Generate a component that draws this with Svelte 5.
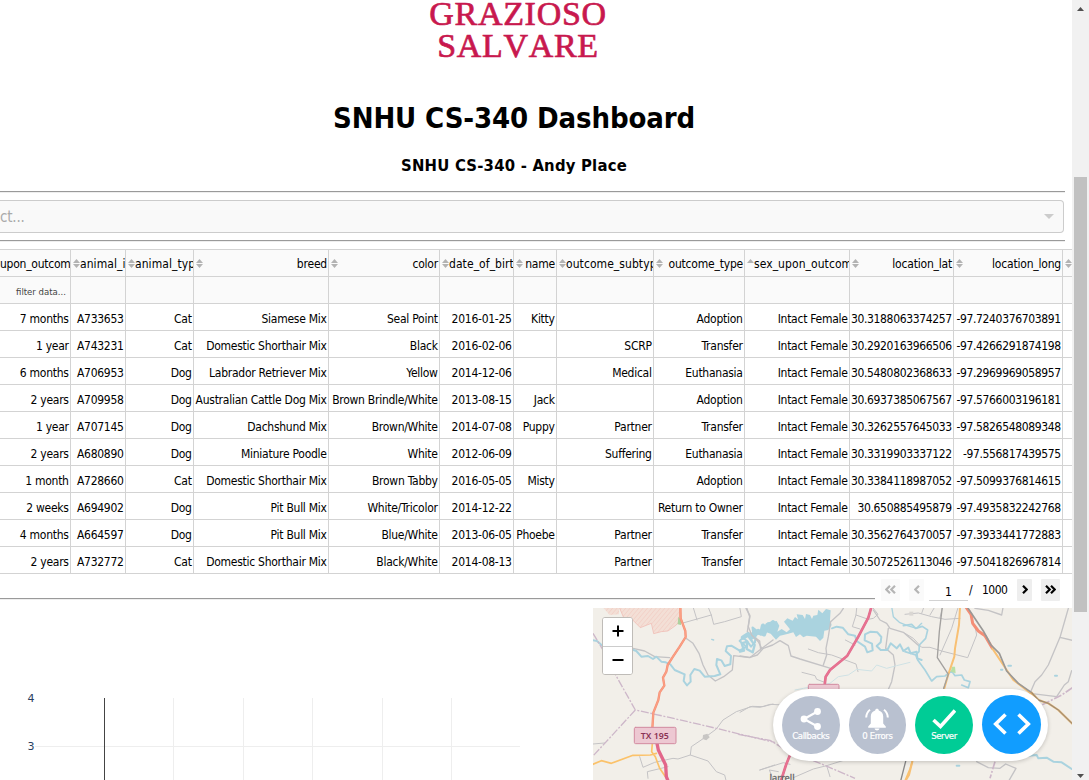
<script>
  const columns = [
    { label: 'upon_outcom', sort: '', clip: true },
    { label: 'animal_id', sort: 'both', clip: true },
    { label: 'animal_type', sort: 'both', clip: true },
    { label: 'breed', sort: 'both' },
    { label: 'color', sort: 'both' },
    { label: 'date_of_birth', sort: 'both', clip: true },
    { label: 'name', sort: 'both' },
    { label: 'outcome_subtype', sort: 'both', clip: true },
    { label: 'outcome_type', sort: 'both' },
    { label: 'sex_upon_outcome', sort: 'up', clip: true },
    { label: 'location_lat', sort: 'both' },
    { label: 'location_long', sort: 'both' },
    { label: '', sort: 'both' }
  ];
  const rows = [
    ['7 months', 'A733653', 'Cat', 'Siamese Mix', 'Seal Point', '2016-01-25', 'Kitty', '', 'Adoption', 'Intact Female', '30.3188063374257', '-97.7240376703891', ''],
    ['1 year', 'A743231', 'Cat', 'Domestic Shorthair Mix', 'Black', '2016-02-06', '', 'SCRP', 'Transfer', 'Intact Female', '30.2920163966506', '-97.4266291874198', ''],
    ['6 months', 'A706953', 'Dog', 'Labrador Retriever Mix', 'Yellow', '2014-12-06', '', 'Medical', 'Euthanasia', 'Intact Female', '30.5480802368633', '-97.2969969058957', ''],
    ['2 years', 'A709958', 'Dog', 'Australian Cattle Dog Mix', 'Brown Brindle/White', '2013-08-15', 'Jack', '', 'Adoption', 'Intact Female', '30.6937385067567', '-97.5766003196181', ''],
    ['1 year', 'A707145', 'Dog', 'Dachshund Mix', 'Brown/White', '2014-07-08', 'Puppy', 'Partner', 'Transfer', 'Intact Female', '30.3262557645033', '-97.5826548089348', ''],
    ['2 years', 'A680890', 'Dog', 'Miniature Poodle', 'White', '2012-06-09', '', 'Suffering', 'Euthanasia', 'Intact Female', '30.3319903337122', '-97.556817439575', ''],
    ['1 month', 'A728660', 'Cat', 'Domestic Shorthair Mix', 'Brown Tabby', '2016-05-05', 'Misty', '', 'Adoption', 'Intact Female', '30.3384118987052', '-97.5099376814615', ''],
    ['2 weeks', 'A694902', 'Dog', 'Pit Bull Mix', 'White/Tricolor', '2014-12-22', '', '', 'Return to Owner', 'Intact Female', '30.650885495879', '-97.4935832242768', ''],
    ['4 months', 'A664597', 'Dog', 'Pit Bull Mix', 'Blue/White', '2013-06-05', 'Phoebe', 'Partner', 'Transfer', 'Intact Female', '30.3562764370057', '-97.3933441772883', ''],
    ['2 years', 'A732772', 'Cat', 'Domestic Shorthair Mix', 'Black/White', '2014-08-13', '', 'Partner', 'Transfer', 'Intact Female', '30.5072526113046', '-97.5041826967814', '']
  ];
</script>

<div class="window">
  <main class="page">
    <div class="logo"><span>GRAZIOSO</span><span class="wide">SALVARE</span></div>
    <h1>SNHU CS-340 Dashboard</h1>
    <h2>SNHU CS-340 - Andy Place</h2>
    <div class="rule"></div>
    <div class="select">
      <span>ct...</span>
      <i class="caret"></i>
    </div>
    <div class="rule second"></div>

    <div class="table">
      <div class="row head">
        {#each columns as c}
          <div class="cell" class:clip={c.clip}>
            {#if c.sort}
              <svg class="sort" width="7" height="9" viewBox="0 0 7 9">
                {#if c.sort === 'up'}
                  <path d="M0 4 3.5 0 7 4z" />
                {:else}
                  <path d="M0 3.9 3.5 0 7 3.9zM0 5.1h7L3.5 9z" />
                {/if}
              </svg>
            {/if}
            <span class="label">{c.label}</span>
          </div>
        {/each}
      </div>
      <div class="row filter">
        {#each columns as c, i}
          <div class="cell">{#if i === 0}<span class="hint">filter data...</span>{/if}</div>
        {/each}
      </div>
      {#each rows as r}
        <div class="row data">
          {#each r as value, i}<div class="cell" class:num={i > 9}><span>{value}</span></div>{/each}
        </div>
      {/each}
    </div>

    <div class="footer">
      <div class="rule third"></div>
      <div class="pager">
        <button class="wide off" aria-label="First"><svg width="11" height="9" viewBox="0 0 11 9"><path d="M5 .8 1.3 4.5 5 8.2M10 .8 6.3 4.5 10 8.2" /></svg></button>
        <button class="off" aria-label="Previous"><svg width="6" height="9" viewBox="0 0 6 9"><path d="M5 .8 1.3 4.5 5 8.2" /></svg></button>
        <span class="current">1</span>
        <span class="slash">/</span>
        <span class="total">1000</span>
        <button class="next" aria-label="Next"><svg width="6" height="9" viewBox="0 0 6 9"><path d="M1 .8 4.7 4.5 1 8.2" /></svg></button>
        <button class="wide" aria-label="Last"><svg width="11" height="9" viewBox="0 0 11 9"><path d="M1 .8 4.7 4.5 1 8.2M6 .8 9.7 4.5 6 8.2" /></svg></button>
      </div>
    </div>

    <div class="bottom">
      <svg class="chart" width="593" height="172" viewBox="0 608 593 172">
        <path d="M173.5 698V780M243.5 698V780M312.5 698V780M382.5 698V780M451.5 698V780M35 746.5H520" stroke="#eee" />
        <path d="M104.5 698V780" stroke="#444" />
        <text x="34.5" y="702">4</text>
        <text x="34.5" y="750">3</text>
      </svg>

      <div class="map">
        <svg width="479" height="172" viewBox="593 608 479 172">
          <defs>
            <pattern id="hatch" width="10" height="10" patternUnits="userSpaceOnUse" patternTransform="rotate(40)">
              <rect width="10" height="10" fill="#f3dfd6" /><path d="M0 0V10" stroke="#f1bdb5" stroke-width="2" />
            </pattern>
          </defs>
          <rect x="593" y="608" width="479" height="172" fill="#f2efe9" />
          <g transform="translate(593 605) scale(.33333)" fill="none" stroke-linejoin="round" stroke-linecap="round">
            <path d="M78 5 95 45 118 44 142 68 175 55 182 86 205 80 225 78 250 60 258 50 262 5z" fill="url(#hatch)" stroke="#f0b5ad" stroke-width="2" />
            <path d="M28 5 50 30 78 28 78 5z" fill="url(#hatch)" />
            <path d="M256 35 264 45 264 60 254 58z" fill="#add19e" stroke="none" />
            <g stroke="#c4c3c5" stroke-width="4">
              <path d="M270 54 355 30 345 5M300 5 312 45M355 30 362 58 395 50 445 35 440 5" stroke-width="3" />
              <path d="M277 98 300 115 318 145 330 180 345 210 367 228 392 215 418 195 422 152 470 158 500 135 540 105M460 5 470 35 463 80 500 108 503 135M120 130 155 138 185 155 230 158" />
              <path d="M540 297 510 305 478 304 430 320 390 345 370 372 335 398 295 425 292 450 255 462 240 460 185 472 150 487 140 455M292 450 345 468 370 500 395 510 400 530M165 520 163 500 225 485M0 417 35 414M500 495 545 480" stroke-width="3" />
            </g>
            <path d="M330 390 343 386 350 397 340 406 329 402z" fill="#c8c6c4" />
            <g stroke="#aad3df" stroke-width="6">
              <path d="M-5 105 12 108 30 124 60 122 100 128 130 138 145 155 165 153 180 162 190 155 205 170 218 172 232 178 245 195 275 208 272 228 282 241 293 230 292 210 304 192 320 197 335 215 365 213 382 208 370 180 372 162 385 166 395 183 412 178 414 153 398 138 402 124 415 122 440 137 460 125 440 108 450 98 462 108 474 125 486 112 487 95" />
              <path d="M450 98 465 88 475 98 485 80 505 85 510 62 520 72 540 52" stroke-width="13" />
              <path d="M356 103 362 105" stroke-width="4" />
            </g>
            <path d="M0 85 27 130 50 170 68 210 127 315 210 333 370 370 480 397 545 412M127 315 60 388 0 453" stroke="#cdb7c9" stroke-width="4" stroke-dasharray="24 5 6 5" stroke-linecap="butt" />
            <path d="M262 0 263 40 277 78 278 96 260 125 240 155 224 180 220 200 210 218 214 242 200 262 196 285 181 323 178 370" stroke="#f58f74" stroke-width="7" />
            <path d="M262 0 263 40 277 78 278 96 260 125 240 155 224 180 220 200 210 218 214 242 200 262 196 285 181 323 178 370" stroke="#fb9f84" stroke-width="4" />
            <path d="M-5 480 25 467 55 475 120 451 172 450 190 445M178 415 176 440 187 455 200 490 222 522" stroke="#fbc26a" stroke-width="5" />
            <path d="M192 415 196 435 218 480 220 515 226 530" stroke="#e2668a" stroke-width="10" />
            <rect x="124" y="367" width="125" height="49" rx="4" fill="#edc8d2" stroke="#d28ba0" stroke-width="3" />
          </g>
          <g transform="translate(740 605) scale(.33333)" fill="none" stroke-linejoin="round" stroke-linecap="round">
            <path d="M75 80 82 52 110 48 118 62 112 80 125 72 140 82 150 73 132 50 142 40 158 47 165 36 174 43 170 28 188 30 195 42 198 27 210 30 216 42 220 32 232 30 235 14 247 25 258 12 272 16 270 45 275 60 265 75 253 77 250 98 240 108 228 95 200 92 190 97 180 88 168 96 160 82 145 86 120 92 108 104 92 86z" fill="#aad3df" />
            <path d="M0 140 12 137 5 115 22 110 20 132 38 142 44 120 28 98 40 82 38 68 62 88 70 65" stroke="#aad3df" stroke-width="7" />
            <path d="M40 95 55 78 72 88 82 60 95 70" stroke="#aad3df" stroke-width="13" />
            <g stroke="#c4c3c5" stroke-width="4">
              <path d="M0 153 30 157 52 150 70 130 98 120 120 107 145 122 153 153 180 162 272 190M18 10 30 32 25 65 35 90 55 110 66 132M250 180 260 150 258 130 265 95 272 50 300 25 310 10" />
              <path d="M205 132 235 143 275 150 348 177 354 200M316 105 345 120M186 202 225 212 230 223 254 232M350 10 348 30 337 65 360 72 M348 30 385 43 400 40 414 28 400 10" stroke-width="3" />
              <path d="M400 15 420 45 440 55 450 70 490 82 540 125M445 70 437 130 460 150 465 180 455 230 440 265" />
              <path d="M0 322 30 305 60 307 90 298 130 300M60 495 130 473 150 478M160 518 220 492 260 482 330 460M260 482 270 515M100 525 88 495 115 500" stroke-width="3" />
            </g>
            <path d="M276 70 290 65 308 68 325 88 345 92 350 108 375 125 382 142 398 136 396 116 374 106 375 88 392 80 412 82 424 96 422 112 410 123 422 135 442 135 452 115 470 130 480 118 490 138 505 128 512 145 530 140 532 160 545 165" stroke="#aad3df" stroke-width="6" />
            <path d="M455 5 460 35 478 52 502 62 530 70 545 55" stroke="#aad3df" stroke-width="4" />
            <path d="M165 255 190 250 270 235 295 215 325 210 350 193 395 198 410 180 440 190 470 182 510 172" stroke="#cfe2e5" stroke-width="3" />
            <path d="M-5 388 90 406 130 430 240 475 345 520" stroke="#cdb7c9" stroke-width="4" stroke-dasharray="24 5 6 5" stroke-linecap="butt" />
            <path d="M396 0 385 38 355 95 322 152 270 195 257 215 254 240M150 450 138 480 122 530" stroke="#e06c8d" stroke-width="8" />
            <path d="M396 0 385 38 355 95 322 152 270 195 257 215 254 240M150 450 138 480 122 530" stroke="#e87291" stroke-width="5" />
            <rect x="205" y="238" width="92" height="49" rx="4" fill="#edc8d2" stroke="#d28ba0" stroke-width="3" />
            <path d="M498 465 482 528" stroke="#888" stroke-width="4" />
            <path d="M518 465 510 492 495 528" stroke="#fbc26a" stroke-width="5" />
          </g>
          <g transform="translate(905 605) scale(.33333)" fill="none" stroke-linejoin="round" stroke-linecap="round">
            <g stroke="#c4c3c5" stroke-width="4">
              <path d="M0 28 40 24 80 35 120 43 165 40M50 25 56 8M75 30 88 8M105 38 112 8M0 85 25 100 50 127 75 127 110 138 188 158 215 90 210 65M105 150 140 70 160 5" stroke-width="3" />
              <path d="M210 10 250 16 290 30 294 8M490 10 480 45 465 97 430 180 410 210 390 230 375 265 455 275 478 240 490 230 500 197M465 97 502 106" />
              <path d="M215 470 250 488 285 490 302 477 333 490 310 530" />
            </g>
            <path d="M-5 62 20 58 32 70 52 64 68 75 62 100 43 120 42 140 32 150 38 165 60 195 80 228 95 215 120 213 140 198 150 212 170 210 178 225 195 230 190 248 170 240M0 140 32 150" stroke="#aad3df" stroke-width="5" />
            <path d="M310 182H318M288 194H292M450 212H456M155 482H163" stroke="#aad3df" stroke-width="6" />
            <path d="M370 452 395 450 400 460 425 458 445 470 470 472 500 492" stroke="#aad3df" stroke-width="6" />
            <path d="M140 185 150 185 152 205 138 200z" fill="#b8dfa5" />
            <path d="M502 248 470 270 410 300 380 340M270 470 255 520" stroke="#cdb7c9" stroke-width="5" stroke-dasharray="24 5 6 5" stroke-linecap="butt" />
            <path d="M182 5 198 28 203 55 220 78 240 92 262 130" stroke="#f48e76" stroke-width="9" />
            <path d="M165 5 162 60 150 130 148 155 130 208 118 250M262 130 295 180 325 225 375 263 400 285M22 470 12 510 0 530" stroke="#f8c074" stroke-width="6" />
            <path d="M112 5 103 80 97 158 130 208 116 250" stroke="#a3a19f" stroke-width="4" />
            <path d="M186 5 235 78 258 120 283 145 305 198 340 235 380 263" stroke="#9a9896" stroke-width="5" />
            <path d="M380 263 400 285 430 295 460 315 503 357" stroke="#d6a868" stroke-width="6" />
            <path d="M380 263 400 285 430 295 460 315 503 357" stroke="#95897b" stroke-width="3" />
            <path d="M13 20h12v12h-12z" fill="#dad7d3" />
          </g>
          <text class="road" x="640.8" y="739.3" textLength="28" lengthAdjust="spacingAndGlyphs">TX 195</text>
          <text class="town" x="769.5" y="780.5" textLength="25" lengthAdjust="spacingAndGlyphs">Jarrell</text>
        </svg>
        <div class="zoom">
          <button aria-label="Zoom in"><svg width="12" height="12" viewBox="0 0 12 12"><path d="M0.5 6H11.5M6 .5V11.5" /></svg></button>
          <button aria-label="Zoom out"><svg width="12" height="12" viewBox="0 0 12 12"><path d="M0.5 6H11.5" /></svg></button>
        </div>
      </div>
    </div>
  </main>

  <div class="scrollbar">
    <svg width="17" height="17" viewBox="0 0 17 17"><path d="M5 11 8.5 7 12 11z" fill="#505050" /></svg>
    <div class="thumb"></div>
    <svg width="17" height="17" viewBox="0 0 17 17"><path d="M5 11 8.5 15 12 11z" fill="#505050" /></svg>
  </div>

  <div class="debug">
    <div class="bubble">
      <svg width="24" height="24" viewBox="0 0 24 24"><path d="M18.5 4.5 5 12 18.5 19.5" fill="none" stroke="#fff" stroke-width="2.2" /><circle cx="18.5" cy="4.5" r="3.4" fill="#fff" /><circle cx="5" cy="12" r="3.4" fill="#fff" /><circle cx="18.5" cy="19.5" r="3.4" fill="#fff" /></svg>
      <span>Callbacks</span>
    </div>
    <div class="bubble">
      <svg width="24" height="24" viewBox="0 0 24 24"><path d="M12 1.7c1 0 1.8.7 1.8 1.7 3 .9 4.4 3.2 4.4 6.2v7l2.6 3v1.2H3.2v-1.2l2.6-3v-7c0-3 1.4-5.3 4.4-6.2 0-1 .8-1.7 1.8-1.7zM9.5 21.600h5a2.500 1.800 0 0 1-5 0z" fill="#fff" /><path d="M5 2.700Q1.400 5.400 1.200 10.500M19 2.700Q22.600 5.400 22.800 10.500" fill="none" stroke="#fff" stroke-width="2" /></svg>
      <span>0 Errors</span>
    </div>
    <div class="bubble ok">
      <svg width="24" height="24" viewBox="0 0 24 24"><path d="M1.500 13 8.500 19.500 23 3.500" fill="none" stroke="#fff" stroke-width="3.600" /></svg>
      <span>Server</span>
    </div>
    <div class="bubble code">
      <svg width="38" height="24" viewBox="0 0 38 24"><path d="M12.500 2.500 2.700 12 12.500 21.500M25.500 2.500 35.300 12 25.500 21.500" fill="none" stroke="#fff" stroke-width="3.600" /></svg>
    </div>
  </div>
</div>

<style>
  :global(body) { margin: 0; background: #fff; overflow: hidden; }
  .window {
    position: relative; display: flex; width: 1089px; height: 780px; overflow: hidden;
    font-family: "DejaVu Sans Condensed", "DejaVu Sans", sans-serif; font-stretch: condensed; color: #000;
  }
  .page { width: 1072px; height: 780px; overflow: hidden; display: flex; flex-direction: column; }
  .page > * { flex-shrink: 0; }
  .logo {
    width: 1036px; height: 62px; display: flex; flex-direction: column; align-items: center;
    font: 34px/32px "Liberation Serif", serif; color: #c8184e; -webkit-text-stroke: 0.7px #c8184e;
    font-kerning: none; letter-spacing: 0.7px;
  }
  .logo span { white-space: nowrap; margin-top: -2px; height: 32px; }
  .logo .wide { margin-top: 0; }
  h1, h2 { margin: 0; width: 1028px; text-align: center; white-space: nowrap; font-weight: bold; }
  h1 { font-size: 29px; line-height: 36px; margin-top: 38px; letter-spacing: -0.13px; }
  h2 { font-size: 16.5px; line-height: 20px; margin-top: 20px; letter-spacing: 0.22px; }
  .rule { width: 1065px; height: 1px; background: #9a9a9a; border-bottom: 1px solid #eee; margin-top: 15px; }
  .rule.second { margin-top: 7px; }
  .select {
    margin-top: 7px; width: 1064px; height: 33px; box-sizing: border-box; border: 1px solid #ccc; border-left: 0;
    border-radius: 0 4px 4px 0; background: #f9f9f9; display: flex; align-items: center; justify-content: space-between;
    padding: 0 9px 0 0; color: #aaa; font-size: 15px; letter-spacing: -0.2px;
  }
  .caret { border: 5px solid transparent; border-top-color: #ccc; border-bottom: 0; }
  .table { margin-top: 7px; border-top: 1px solid #d3d3d3; font-size: 12px; letter-spacing: -0.2px; }
  .row { display: grid; grid-template-columns: 71px 55px 68px 135px 111px 74px 43px 97px 91px 105px 104px 109px 9px; height: 27px; }
  .cell {
    box-sizing: border-box; border-right: 1px solid #d3d3d3; border-bottom: 1px solid #d3d3d3; min-width: 0;
    display: flex; align-items: center; justify-content: flex-end; padding: 0 1px 0 2px; white-space: nowrap; overflow: hidden;
  }
  .data .cell { padding: 3px 1.3px 0 0; letter-spacing: -0.26px; }
  .data .num { letter-spacing: -0.36px; }
  .cell:last-child { border-right: 0; }
  .head .cell, .filter .cell { background: #fafafa; }
  .head .cell { justify-content: space-between; }
  .head .clip { justify-content: flex-start; padding-right: 0; letter-spacing: 0.07px; }
  .head .cell:first-child { padding-left: 0; letter-spacing: -0.25px; }
  .label { padding-top: 1px; }
  .sort { fill: #b3b3b3; flex: none; }
  .hint { font-size: 9.5px; color: #444; padding-right: 3px; padding-top: 2px; letter-spacing: 0; }
  .footer { height: 34px; display: flex; align-items: flex-start; font-size: 12px; }
  .rule.third { width: 875px; margin-top: 24px; }
  .pager { display: flex; align-items: center; height: 22px; margin-top: 5px; padding-left: 6px; }
  .pager button { border: 0; padding: 0; width: 15px; height: 22px; background: #eee; display: flex; align-items: center; justify-content: center; border-radius: 1px; }
  .pager button svg { margin-top: -1px; }
  .pager .wide { width: 19px; }
  .pager .off { background: #fafafa; }
  .pager path { fill: none; stroke: #000; stroke-width: 2.2; }
  .pager .off path { stroke: #b5b5b5; }
  .pager .off + .off { margin-left: 9px; }
  .current { width: 39px; height: 21px; line-height: 26px; border-bottom: 1px solid #d3d3d3; margin-left: 5px; text-align: center; }
  .slash { margin-left: 1px; width: 13px; }
  .total { width: 35px; letter-spacing: -0.5px; }
  .next { margin-right: 9px; }
  .bottom { display: flex; height: 172px; }
  .chart { flex: none; }
  .chart text { font: 11px "DejaVu Sans", sans-serif; fill: #2a3f5f; text-anchor: end; }
  .map { position: relative; width: 479px; height: 172px; }
  .map > svg { display: block; }
  .road { font: 600 9.5px "Noto Sans", sans-serif; fill: #8a3254; }
  .town { font: 9.5px "Noto Sans", sans-serif; fill: #666; stroke: #666; stroke-width: .3; }
  .zoom {
    position: absolute; left: 9px; top: 9px; width: 31px; height: 58px; box-sizing: border-box; border: 1px solid #bfbcb8; border-radius: 3px;
    background: #fff; overflow: hidden; display: flex; flex-direction: column;
  }
  .zoom button { flex: 1; border: 0; padding: 0 0 1px; background: #fff; display: flex; align-items: center; justify-content: center; }
  .zoom button:first-child { border-bottom: 1px solid #ccc; }
  .zoom path { fill: none; stroke: #000; stroke-width: 2; }
  .scrollbar { width: 17px; height: 780px; background: #f1f1f1; display: flex; flex-direction: column; align-items: center; }
  .scrollbar svg { display: block; flex: none; }
  .scrollbar .thumb { width: 13px; height: 435px; margin: 160px 0 151px; background: #c1c1c1; flex: none; }
  .debug {
    position: absolute; left: 773px; top: 689px; width: 275px; height: 72px; box-sizing: border-box; border-radius: 36px;
    background: #fff; display: flex; align-items: center; gap: 9px; padding-left: 9px; box-shadow: 0 1px 4px rgba(0, 0, 0, 0.2);
  }
  .bubble {
    width: 57.6px; height: 58px; flex: none; border-radius: 50%; background: #b9c1d0; color: #fff; display: flex; flex-direction: column;
    align-items: center; box-sizing: border-box; padding-top: 11px; font: 9.5px/10px "DejaVu Sans Condensed", "DejaVu Sans", sans-serif; letter-spacing: -0.4px; white-space: nowrap;
    -webkit-text-stroke: 0.2px #fff;
  }
  .bubble svg { flex: none; }
  .ok { background: #00cc96; }
  .code { background: #119dff; width: 58.5px; height: 59px; padding-top: 17px; margin: 0 0 1px 0.5px; }
</style>
